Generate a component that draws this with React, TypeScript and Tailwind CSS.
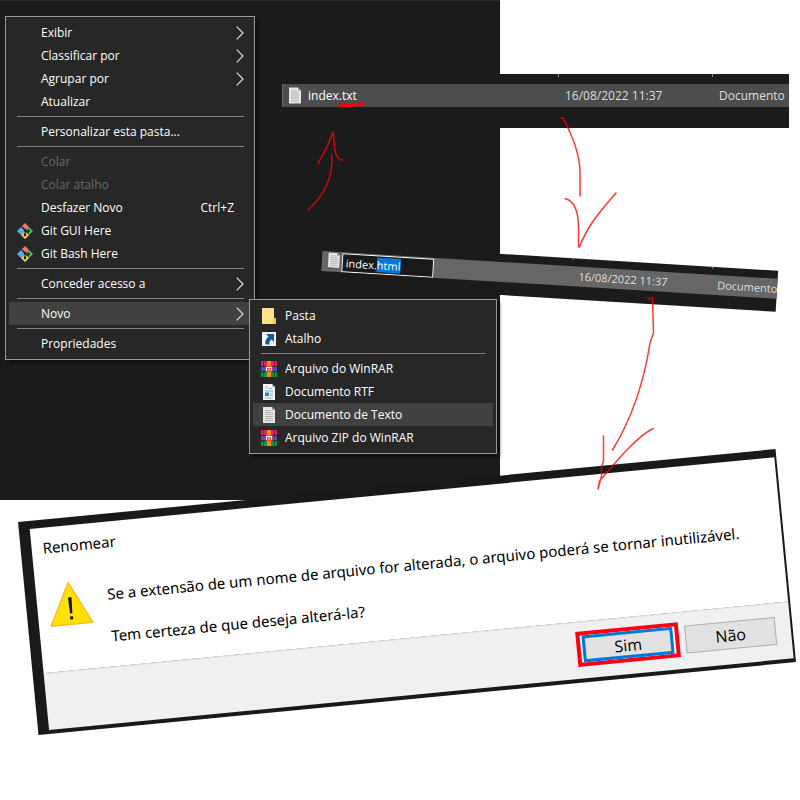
import { useEffect, useRef, type ReactNode } from "react";

function GitIcon() {
  return (
    <svg viewBox="0 0 16 16" className="size-4">
      <path d="M8 0l4 4-4 4-4-4z" fill="#f07878" />
      <path d="M4 4l4 4-4 4-4-4z" fill="#5aa9f5" />
      <path d="M12 4l4 4-4 4-4-4z" fill="#4fc04f" />
      <path d="M8 8l4 4-4 4-4-4z" fill="#fbdc6a" />
      <path d="M4.500 3.500l7 7M8 6v6" stroke="#1e1e1e" strokeWidth="1.200" fill="none" />
      <circle cx="8" cy="7" r="1.300" fill="#1e1e1e" />
      <circle cx="11.500" cy="8" r="1.400" fill="#1e1e1e" />
      <circle cx="8" cy="12" r="1.400" fill="#1e1e1e" />
    </svg>
  );
}

function FolderIcon() {
  return (
    <svg viewBox="0 0 16 16" className="size-4">
      <path d="M1 0h12v10h2v6H1z" fill="#ffe08a" />
      <path d="M13 10h2v6h-3v-4z" fill="#f3c64e" />
    </svg>
  );
}

function ShortcutIcon() {
  return (
    <svg viewBox="0 0 16 16" className="size-4">
      <path d="M1 1h14v14H1z" fill="#f4f4f4" />
      <path d="M5 3h8v8l-2.500-2.500C8.500 10 8 11.500 8.500 13.500H4.500C3.500 10.500 5 7.500 7.500 5.500z" fill="#0f5aa5" />
    </svg>
  );
}

function RarIcon() {
  return (
    <svg viewBox="0 0 16 16" className="size-4">
      <path d="M0 0h16v5H0z" fill="#e02058" />
      <path d="M0 5.500h16v5H0z" fill="#4f4fc4" />
      <path d="M0 11h16v5H0z" fill="#0f9a34" />
      <path d="M0 5h16v.8H0zM0 10.500h16v.8H0z" fill="#1c1c2c" />
      <path d="M2 0h1v5H2zM2 11h1v5H2zM13 0h1v5h-1zM13 11h1v5h-1z" fill="#000" fillOpacity="0.350" />
      <path d="M6 0h4v16H6z" fill="#f58a1c" />
      <path d="M4.500 5h7v6h-7z" fill="#e8452c" />
      <path d="M5.500 9.800V6.500h5v3.300M8 7.500v2.300" stroke="#fff" fill="none" />
    </svg>
  );
}

function RtfIcon() {
  return (
    <svg viewBox="0 0 16 16" className="size-4">
      <path d="M2 0h9l3 3v13H2z" fill="#f5f6f8" />
      <path d="M11 0l3 3h-3z" fill="#aab0b8" />
      <path d="M4 4.500l1.500-2 1.500 2M8 4.500h3M4 7h8M9 9.500h3M9 11.500h3M4 14h8" stroke="#8fa9dc" fill="none" />
      <path d="M4 8.500h4V12H4z" fill="#2f86c8" />
    </svg>
  );
}

function TextFileIcon() {
  return (
    <svg viewBox="0 0 16 16" className="size-full">
      <path d="M2 0h9l3 3v13H2z" fill="#e6e6e6" />
      <path d="M11 0l3 3h-3z" fill="#9a9a9a" />
      <path d="M4 3.500h6M4 5.500h8M4 7.500h8M4 9.500h8M4 11.500h8M4 13.500h8" stroke="#b4b4b4" fill="none" />
    </svg>
  );
}

function Chevron() {
  return (
    <svg viewBox="0 0 8 14" className="h-[14px] w-2">
      <path d="M0.700 0.700L7 7L0.700 13.300" stroke="#dedede" strokeWidth="1.200" fill="none" />
    </svg>
  );
}

type ItemProps = {
  label: string;
  icon?: ReactNode;
  hint?: string;
  arrow?: boolean;
  disabled?: boolean;
  active?: boolean;
};

function Item({ label, icon, hint, arrow, disabled, active }: ItemProps) {
  return (
    <li>
      <button
        type="button"
        disabled={disabled}
        className={`flex h-[23px] w-full items-center pr-[7px] pl-2 text-left text-xs font-medium ${
          active ? "bg-[#414141]" : ""
        } ${disabled ? "text-[#6a6a6a]" : "text-white"}`}
      >
        <span className="flex w-6 shrink-0 items-center">{icon}</span>
        <span className="grow">{label}</span>
        {hint && <span className="pr-[10px]">{hint}</span>}
        {arrow && <Chevron />}
      </button>
    </li>
  );
}

function Separator() {
  return (
    <li role="separator" className="mr-[7px] ml-2 flex h-[7px] items-center">
      <span className="h-px w-full bg-[#808080]" />
    </li>
  );
}

function Menu({ children }: { children: ReactNode }) {
  return (
    <ul className="border border-[#9a9a9a] bg-[#272727] px-[3px] py-1 shadow-[3px_3px_3px_rgba(0,0,0,0.5)]">
      {children}
    </ul>
  );
}

function RenameField() {
  const ref = useRef<HTMLInputElement>(null);
  useEffect(() => {
    ref.current?.focus({ preventScroll: true });
    ref.current?.setSelectionRange(6, 10);
  }, []);
  return (
    <input
      ref={ref}
      aria-label="Nome do arquivo"
      defaultValue="index.html"
      className="h-[19px] w-[92px] border border-white bg-[#191919] px-[3px] text-[11px] text-white outline-none selection:bg-[#0078d7] selection:text-white"
    />
  );
}

function Annotations() {
  return (
    <svg
      viewBox="0 0 800 800"
      className="pointer-events-none absolute top-0 left-0 size-[800px]"
      fill="none"
      stroke="#ff0000"
      strokeLinecap="round"
      strokeLinejoin="round"
    >
      <path d="M340 106L350 105.500L363 103.500" strokeWidth="3.200" />
      <g strokeWidth="1.500" strokeOpacity="0.780">
        <path d="M308 210C324 196 334 176 331.500 154" />
        <path d="M318.500 164L319 161C325 154 329 142 333 132C335 142 333 160 342.500 160" />
        <path d="M561 118H563C573 137 580 156 580 172V196" />
        <path d="M565 198.500C575 201 578.500 212 578.500 228V247H579.500C587 228 594 218 616 193" />
        <path d="M648 299L652.500 298L653.500 333L650 343C645 375 634 415 612.500 450" />
        <path d="M603.500 436V461L601.500 467V476L598 489L599.500 481C615 463 635 438 653 428.500" />
      </g>
    </svg>
  );
}

export default function App() {
  return (
    <main className="relative min-h-screen w-full overflow-hidden bg-white font-['Open_Sans','Noto_Sans',sans-serif]">
      <section className="h-[500px] w-[500px] border-t border-[#2b2b2b] bg-[#1b1b1b]" />

      <nav aria-label="Menu de contexto" className="absolute top-4 left-[5px] w-[250px]">
        <Menu>
          <Item label="Exibir" arrow />
          <Item label="Classificar por" arrow />
          <Item label="Agrupar por" arrow />
          <Item label="Atualizar" />
          <Separator />
          <Item label="Personalizar esta pasta..." />
          <Separator />
          <Item label="Colar" disabled />
          <Item label="Colar atalho" disabled />
          <Item label="Desfazer Novo" hint="Ctrl+Z" />
          <Item label="Git GUI Here" icon={<GitIcon />} />
          <Item label="Git Bash Here" icon={<GitIcon />} />
          <Separator />
          <Item label="Conceder acesso a" arrow />
          <Separator />
          <Item label="Novo" arrow active />
          <Separator />
          <Item label="Propriedades" />
        </Menu>
      </nav>

      <section className="absolute top-[74px] left-[282px] h-[54px] w-[507px] bg-[#1b1b1b]">
        <div className="flex h-[10px] pl-[276px]">
          <span className="h-[3px] w-px bg-[#8a8a8a]" />
          <span className="ml-[153px] h-[3px] w-px bg-[#8a8a8a]" />
        </div>
        <div className="flex h-[23px] items-center overflow-hidden border-l border-[#6a6a6a] bg-[#4d4d4d] pl-1 text-xs text-[#dedede]">
          <span className="mb-px h-[17px] w-4 shrink-0">
            <TextFileIcon />
          </span>
          <span className="w-[262px] shrink-0 pl-[5px] text-white">index.txt</span>
          <span className="w-[154px] shrink-0">16/08/2022 11:37</span>
          <span>Documento</span>
        </div>
      </section>

      <section className="absolute top-[243px] left-[323px] h-[41px] w-[456px] origin-top-left rotate-[3.5deg] bg-[#1b1b1b]">
        <div className="flex h-2 pl-[250px]">
          <span className="h-0.5 w-px bg-[#8a8a8a]" />
          <span className="ml-[139px] h-0.5 w-px bg-[#8a8a8a]" />
        </div>
        <div className="flex h-5 items-center overflow-hidden bg-[#666666] pl-1 text-[11px] text-[#dedede]">
          <span className="mb-1 h-[15px] w-4 shrink-0">
            <TextFileIcon />
          </span>
          <span className="flex w-[237px] shrink-0">
            <RenameField />
          </span>
          <span className="w-[139px] shrink-0">16/08/2022 11:37</span>
          <span>Documento</span>
        </div>
      </section>

      <nav aria-label="Novo" className="absolute top-[299px] left-[249px] w-[248px]">
        <Menu>
          <Item label="Pasta" icon={<FolderIcon />} />
          <Item label="Atalho" icon={<ShortcutIcon />} />
          <Separator />
          <Item label="Arquivo do WinRAR" icon={<RarIcon />} />
          <Item label="Documento RTF" icon={<RtfIcon />} />
          <Item
            label="Documento de Texto"
            icon={
              <span className="size-4">
                <TextFileIcon />
              </span>
            }
            active
          />
          <Item label="Arquivo ZIP do WinRAR" icon={<RarIcon />} />
        </Menu>
      </nav>

      <section
        role="dialog"
        aria-labelledby="dialog-title"
        className="absolute top-[522px] left-[18px] w-[761px] origin-top-left rotate-[-5.5deg] bg-[#191919] pt-2 pr-[2px] pb-1 pl-[11px] text-black"
      >
        <div className="h-[145px] bg-white pt-2 pl-[11px] font-['Noto_Sans','Open_Sans',sans-serif] text-[15px]">
          <h1 id="dialog-title" className="leading-6">
            Renomear
          </h1>
          <div className="flex gap-4 pt-6">
            <svg viewBox="0 0 44 44" className="size-11 shrink-0">
              <path d="M22 1L43 43H1z" fill="#ffe200" stroke="#fdbb2d" strokeWidth="1.500" strokeLinejoin="round" />
              <path d="M20.500 16h3.500l-.6 16h-2.300z" fill="#111" />
              <path d="M20.700 35h3v3h-3z" fill="#111" />
            </svg>
            <div className="flex flex-col gap-[18px] pt-1 leading-6 whitespace-nowrap">
              <p>Se a extensão de um nome de arquivo for alterada, o arquivo poderá se tornar inutilizável.</p>
              <p>Tem certeza de que deseja alterá-la?</p>
            </div>
          </div>
        </div>
        <div className="flex h-[57px] items-start justify-end gap-[6px] border-t border-[#dfdfdf] bg-[#f0f0f0] pt-[9px] pr-[15px] text-base">
          <div className="border-4 border-[#ff0012] bg-white px-[2px]">
            <button type="button" className="block h-[27px] w-[91px] border-[3px] border-[#0078d7] bg-[#e1e1e1] leading-5">
              Sim
            </button>
          </div>
          <button type="button" className="mt-1 h-7 w-[91px] border border-[#adadad] bg-[#e1e1e1] leading-5">
            Não
          </button>
        </div>
      </section>

      <Annotations />
    </main>
  );
}
